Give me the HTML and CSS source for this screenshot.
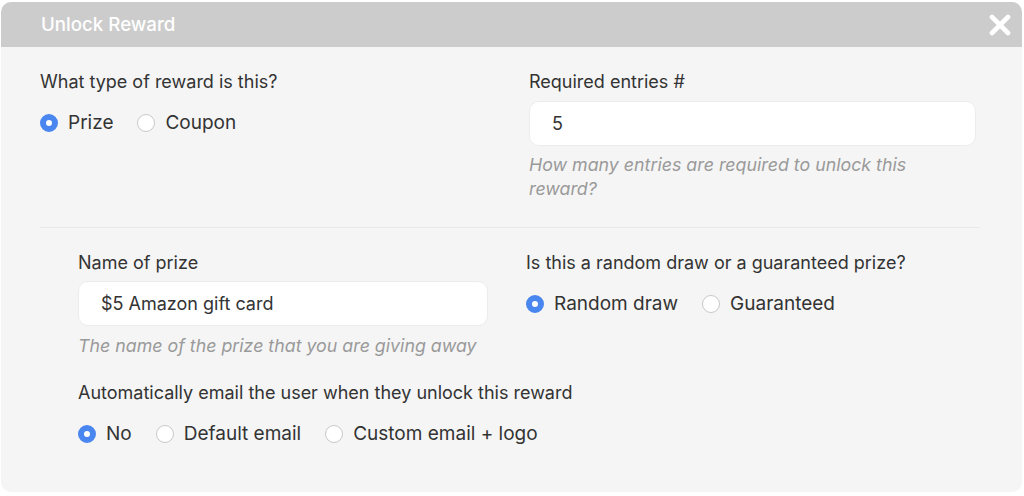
FILE: index.html
```html
<!DOCTYPE html>
<html lang="en">
<head>
    <meta charset="UTF-8">
    <meta name="viewport" content="width=device-width, initial-scale=1.0">
    <title>Unlock Reward</title>
    <link rel="stylesheet" href="styles.css">
</head>
<body>
    <div class="modal">
        <header class="modal-header">
            <h1>Unlock Reward</h1>
            <button class="close-button" aria-label="Close">
                <svg width="22" height="22" viewBox="0 0 22 22">
                    <path d="M3 3 L19 19 M19 3 L3 19" stroke="#fff" stroke-width="4.6" stroke-linecap="round"/>
                </svg>
            </button>
        </header>
        <div class="modal-body">
            <div class="section top-section">
                <div class="field">
                    <label class="field-label">What type of reward is this?</label>
                    <div class="radio-group">
                        <label class="radio"><span class="dot checked"></span>Prize</label>
                        <label class="radio"><span class="dot"></span>Coupon</label>
                    </div>
                </div>
                <div class="field">
                    <label class="field-label">Required entries #</label>
                    <div class="text-input">5</div>
                    <p class="help">How many entries are required to unlock this reward?</p>
                </div>
            </div>

            <hr class="divider">

            <div class="section prize-section">
                <div class="field">
                    <label class="field-label">Name of prize</label>
                    <div class="text-input">$5 Amazon gift card</div>
                    <p class="help">The name of the prize that you are giving away</p>
                </div>
                <div class="field">
                    <label class="field-label">Is this a random draw or a guaranteed prize?</label>
                    <div class="radio-group">
                        <label class="radio"><span class="dot checked"></span>Random draw</label>
                        <label class="radio"><span class="dot"></span>Guaranteed</label>
                    </div>
                </div>
            </div>

            <div class="section email-section">
                <label class="field-label">Automatically email the user when they unlock this reward</label>
                <div class="radio-group">
                    <label class="radio"><span class="dot checked"></span>No</label>
                    <label class="radio"><span class="dot"></span>Default email</label>
                    <label class="radio"><span class="dot"></span>Custom email + logo</label>
                </div>
            </div>
        </div>
    </div>
</body>
</html>
```

FILE: styles.css
```css
body {
    font-family: Inter, "Noto Sans", sans-serif;
    margin: 0;
    background-color: #ffffff;
    color: #333333;
}
.modal {
    margin: 2px 2px 0 1px;
    height: 490px;
    background-color: #f5f5f5;
    border-radius: 10px;
    overflow: hidden;
}
.modal-header {
    display: flex;
    align-items: center;
    justify-content: space-between;
    height: 45px;
    padding: 0 11px 0 40px;
    background-color: #cccccc;
}
.modal-header h1 {
    margin: 0;
    font-size: 18.7px;
    font-weight: 500;
    color: white;
}
.close-button {
    display: flex;
    padding: 0;
    background: none;
    border: none;
    cursor: pointer;
}
.modal-body {
    padding-top: 23px;
}
.section {
    display: grid;
}
.top-section {
    grid-template-columns: 489px 1fr;
    padding: 0 46px 0 39px;
}
.prize-section {
    grid-template-columns: 448px 1fr;
    padding: 0 46px 0 77px;
}
.email-section {
    padding: 23px 46px 0 77px;
}
.field-label {
    display: block;
    font-size: 18px;
    line-height: 24px;
}
.radio-group {
    display: flex;
    gap: 24px;
    margin-top: 17px;
}
.radio {
    display: flex;
    align-items: center;
    gap: 10px;
    font-size: 19px;
    line-height: 24px;
}
.dot {
    box-sizing: border-box;
    width: 18px;
    height: 18px;
    border-radius: 50%;
    background-color: white;
    border: 1px solid #c8c8c8;
}
.dot.checked {
    border: 6px solid #4a86f0;
    background-color: white;
}
.text-input {
    box-sizing: border-box;
    height: 45px;
    margin-top: 7px;
    padding: 0 22px;
    display: flex;
    align-items: center;
    background-color: white;
    border: 1px solid #ececec;
    border-radius: 10px;
    font-size: 18px;
}
.prize-section .text-input {
    width: 410px;
    margin-top: 6px;
}
.help {
    margin: 7px 0 0;
    padding-right: 60px;
    font-size: 17.8px;
    line-height: 24px;
    font-style: italic;
    color: #9a9a9a;
}
.prize-section .help {
    margin-top: 8px;
    padding-right: 0;
}
.divider {
    margin: 26px 42px 23px 39px;
    border: none;
    border-top: 1px solid #e8e8e8;
}
```
